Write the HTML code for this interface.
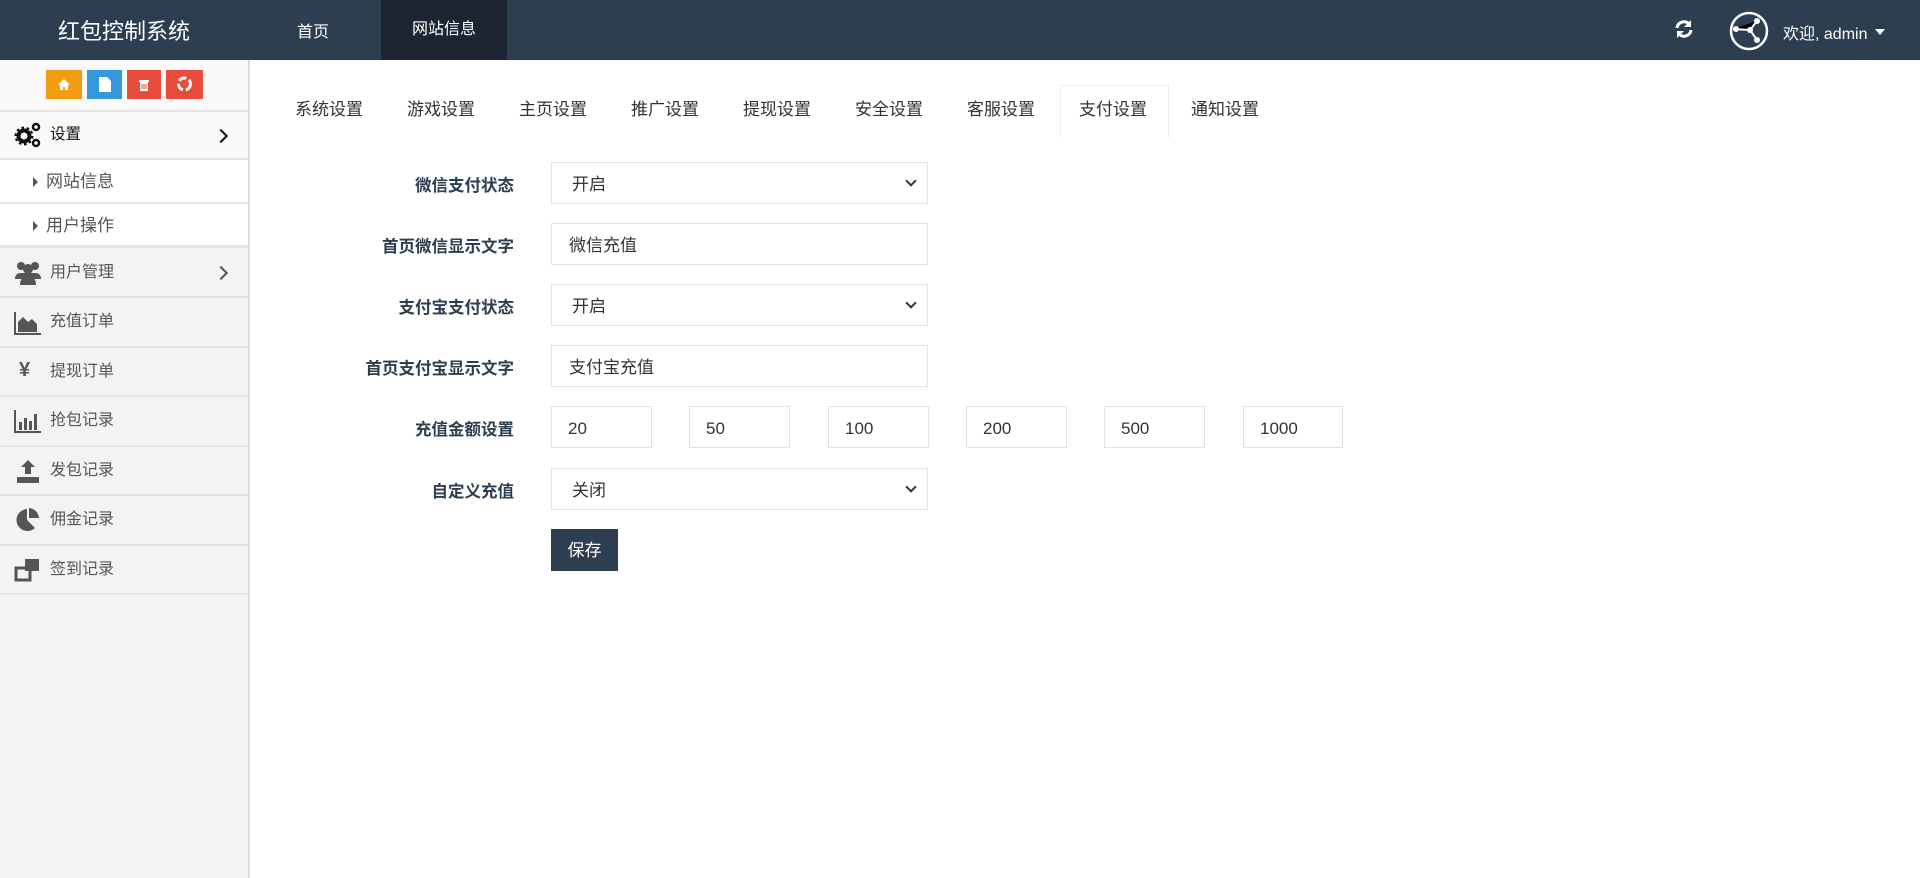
<!DOCTYPE html>
<html><head><meta charset="utf-8"><style>
*{margin:0;padding:0;box-sizing:border-box}
body{width:1920px;height:878px;overflow:hidden;background:#fff;font-family:"Liberation Sans","Noto Sans CJK SC",sans-serif;color:#333;position:relative}
.hd{position:absolute;left:0;top:0;width:1920px;height:60px;background:#2d3e50;color:#fff}
.abs{position:absolute}
.side{position:absolute;left:0;top:60px;width:250px;height:818px;background:#f3f3f3;border-right:2px solid #ddd}
.row{position:absolute;left:0;width:248px;border-bottom:2px solid #e4e4e4;font-size:16px;color:#555;line-height:20px}
.row .ic{position:absolute;left:14px;width:28px;height:26px}
.row span.t{position:absolute;left:50px}
.chev{position:absolute;left:216px;width:10px;height:10px;border-right:2px solid #333;border-top:2px solid #333;transform:rotate(45deg)}
.tab{position:absolute;top:86px;height:52px;line-height:48px;font-size:17px;color:#333}
.lbl{position:absolute;right:1406px;font-size:16.5px;font-weight:bold;color:#2d3e50;text-align:right;white-space:nowrap;line-height:20px;margin-top:4px}
.inp{position:absolute;height:42px;border:1px solid #dde3ec;background:#fff;font-size:17px;line-height:44px;padding-left:20px;color:#333}
.sel:after{content:"";position:absolute;right:12px;top:14px;width:6px;height:6px;border-right:2px solid #333;border-bottom:2px solid #333;transform:rotate(45deg)}
</style></head><body>
<div class="hd">
 <div class="abs" style="left:58px;top:14px;font-size:22px;">红包控制系统</div>
 <div class="abs" style="left:297px;top:18px;font-size:16px;">首页</div>
 <div class="abs" style="left:381px;top:0;width:126px;height:60px;background:#1c2531;font-size:16px;line-height:60px;text-align:center;">网站信息</div>
 <svg class="abs" style="left:1674px;top:19px" width="20" height="20" viewBox="0 0 20 20"><path d="M3 9a7 7 0 0 1 12-4" stroke="#fff" stroke-width="3" fill="none"/><path d="M17 1v7h-7z" fill="#fff"/><path d="M17 11a7 7 0 0 1-12 4" stroke="#fff" stroke-width="3" fill="none"/><path d="M3 19v-7h7z" fill="#fff"/></svg>
 <svg class="abs" style="left:1729px;top:11px" width="40" height="40" viewBox="0 0 40 40"><circle cx="20" cy="20" r="18" stroke="#fff" stroke-width="2.5" fill="none"/><path d="M4 18L21 19L28 10M21 19L28 29" stroke="#fff" stroke-width="2"/><circle cx="7" cy="18" r="3" fill="#fff"/><circle cx="21" cy="19" r="3" fill="#fff"/><circle cx="28" cy="10" r="3" fill="#fff"/><circle cx="28" cy="29" r="3" fill="#fff"/></svg>
 <div class="abs" style="left:1783px;top:20px;font-size:16px;">欢迎, admin</div>
 <div class="abs" style="left:1875px;top:29px;border-left:5px solid transparent;border-right:5px solid transparent;border-top:6px solid #fff"></div>
</div>
<div class="side">
 <div class="abs" style="left:0;top:0;width:248px;height:50px;background:#f9f9f9"></div>
 <div class="abs" style="left:46px;top:10px;width:36px;height:29px;background:#f39c12"><svg width="36" height="29"><path d="M12 15l6-6 6 6h-2v5h-3v-3h-2v3h-3v-5z" fill="#fff"/></svg></div>
 <div class="abs" style="left:87px;top:10px;width:35px;height:29px;background:#3498db"><svg width="35" height="29"><path d="M12 7h8l4 4v11h-12z" fill="#fff"/></svg></div>
 <div class="abs" style="left:127px;top:10px;width:34px;height:29px;background:#e74c3c"><svg width="34" height="29"><path d="M12 10h10v2h-10zM13 12h8v9h-8z" fill="#fff"/><path d="M15 14v5M17 14v5M19 14v5" stroke="#e74c3c"/></svg></div>
 <div class="abs" style="left:166px;top:10px;width:37px;height:29px;background:#e74c3c"><svg width="37" height="29"><circle cx="18.5" cy="14" r="6" stroke="#fff" stroke-width="3" fill="none" stroke-dasharray="8 3"/></svg></div>
 <div class="row" style="top:50px;height:50px;background:#f9f9f9;border-top:2px solid #e4e4e4;color:#111">
  <svg class="ic" style="top:10px" viewBox="0 0 28 26"><circle cx="10" cy="14" r="5.5" fill="none" stroke="#111" stroke-width="4"/><circle cx="10" cy="14" r="8" fill="none" stroke="#111" stroke-width="3" stroke-dasharray="2.5 2.5"/><circle cx="22" cy="5" r="3" fill="none" stroke="#111" stroke-width="2.5"/><circle cx="22" cy="21" r="3" fill="none" stroke="#111" stroke-width="2.5"/></svg>
  <span class="t" style="top:13px;font-size:15.5px">设置</span><span class="chev" style="top:19px;border-color:#111"></span></div>
 <div class="row" style="top:100px;height:44px;background:#fff"><span class="abs" style="left:33px;top:17px;border-top:5px solid transparent;border-bottom:5px solid transparent;border-left:5px solid #555"></span><span class="abs" style="left:46px;top:12px;font-size:17px">网站信息</span></div>
 <div class="row" style="top:144px;height:44px;background:#fff;border-bottom:3px solid #e4e4e4"><span class="abs" style="left:33px;top:17px;border-top:5px solid transparent;border-bottom:5px solid transparent;border-left:5px solid #555"></span><span class="abs" style="left:46px;top:12px;font-size:17px">用户操作</span></div>
 <div class="row" style="top:188px;height:50px"><svg class="ic" style="top:12px" viewBox="0 0 28 26"><circle cx="7" cy="6" r="4" fill="#555"/><circle cx="21" cy="6" r="4" fill="#555"/><circle cx="14" cy="9" r="5" fill="#555"/><path d="M1 19q0-6 6-6h14q6 0 6 6zM6 25q0-9 8-9t8 9z" fill="#555"/></svg><span class="t" style="top:15px">用户管理</span><span class="chev" style="top:20px;border-color:#555"></span></div>
 <div class="row" style="top:238px;height:50px"><svg class="ic" style="top:12px" viewBox="0 0 28 26"><path d="M1 2v22h26" stroke="#555" stroke-width="2" fill="none"/><path d="M4 22v-10l5-5 5 5 4-3 5 5v8z" fill="#555"/></svg><span class="t" style="top:14px">充值订单</span></div>
 <div class="row" style="top:288px;height:49px"><span class="abs" style="left:19px;top:12px;font-size:20px;color:#555;font-weight:bold">¥</span><span class="t" style="top:14px">提现订单</span></div>
 <div class="row" style="top:337px;height:50px"><svg class="ic" style="top:11px" viewBox="0 0 28 26"><path d="M1 2v22h26" stroke="#555" stroke-width="2" fill="none"/><path d="M5 14h3v8h-3zM10 10h3v12h-3zM15 13h3v9h-3zM20 6h3v16h-3z" fill="#555"/></svg><span class="t" style="top:14px">抢包记录</span></div>
 <div class="row" style="top:387px;height:49px"><svg class="ic" style="top:11px" viewBox="0 0 28 26"><path d="M14 2l7 7h-4v7h-6v-7h-4zM3 19h22v6h-22z" fill="#555"/></svg><span class="t" style="top:14px">发包记录</span></div>
 <div class="row" style="top:436px;height:50px"><svg class="ic" style="top:11px" viewBox="0 0 28 26"><path d="M13 2v11l8 8a11 11 0 1 1-8-19z" fill="#555"/><path d="M15 1a11 11 0 0 1 10 10h-10z" fill="#555"/></svg><span class="t" style="top:14px">佣金记录</span></div>
 <div class="row" style="top:486px;height:49px"><svg class="ic" style="top:11px" viewBox="0 0 28 26"><rect x="2" y="11" width="14" height="12" fill="none" stroke="#555" stroke-width="3"/><rect x="11" y="2" width="14" height="12" fill="#555"/></svg><span class="t" style="top:14px">签到记录</span></div>
</div>
<div class="abs" style="left:1060px;top:85px;width:109px;height:53px;border:1px solid #eee;border-bottom:none;background:#fff"></div>
<div class="tab" style="left:295px">系统设置</div>
<div class="tab" style="left:407px">游戏设置</div>
<div class="tab" style="left:519px">主页设置</div>
<div class="tab" style="left:631px">推广设置</div>
<div class="tab" style="left:743px">提现设置</div>
<div class="tab" style="left:855px">安全设置</div>
<div class="tab" style="left:967px">客服设置</div>
<div class="tab" style="left:1079px">支付设置</div>
<div class="tab" style="left:1191px">通知设置</div>

<div class="lbl" style="top:172px">微信支付状态</div>
<div class="inp sel" style="left:551px;top:162px;width:377px">开启</div>
<div class="lbl" style="top:233px">首页微信显示文字</div>
<div class="inp" style="left:551px;top:223px;width:377px;padding-left:17px">微信充值</div>
<div class="lbl" style="top:294px">支付宝支付状态</div>
<div class="inp sel" style="left:551px;top:284px;width:377px">开启</div>
<div class="lbl" style="top:355px">首页支付宝显示文字</div>
<div class="inp" style="left:551px;top:345px;width:377px;padding-left:17px">支付宝充值</div>
<div class="lbl" style="top:416px">充值金额设置</div>
<div class="inp" style="left:551px;top:406px;width:101px;padding-left:16px">20</div>
<div class="inp" style="left:689px;top:406px;width:101px;padding-left:16px">50</div>
<div class="inp" style="left:828px;top:406px;width:101px;padding-left:16px">100</div>
<div class="inp" style="left:966px;top:406px;width:101px;padding-left:16px">200</div>
<div class="inp" style="left:1104px;top:406px;width:101px;padding-left:16px">500</div>
<div class="inp" style="left:1243px;top:406px;width:100px;padding-left:16px">1000</div>
<div class="lbl" style="top:478px">自定义充值</div>
<div class="inp sel" style="left:551px;top:468px;width:377px">关闭</div>
<div class="abs" style="left:551px;top:529px;width:67px;height:42px;background:#2d3e50;color:#fff;font-size:17px;line-height:44px;text-align:center">保存</div>
</body></html>
